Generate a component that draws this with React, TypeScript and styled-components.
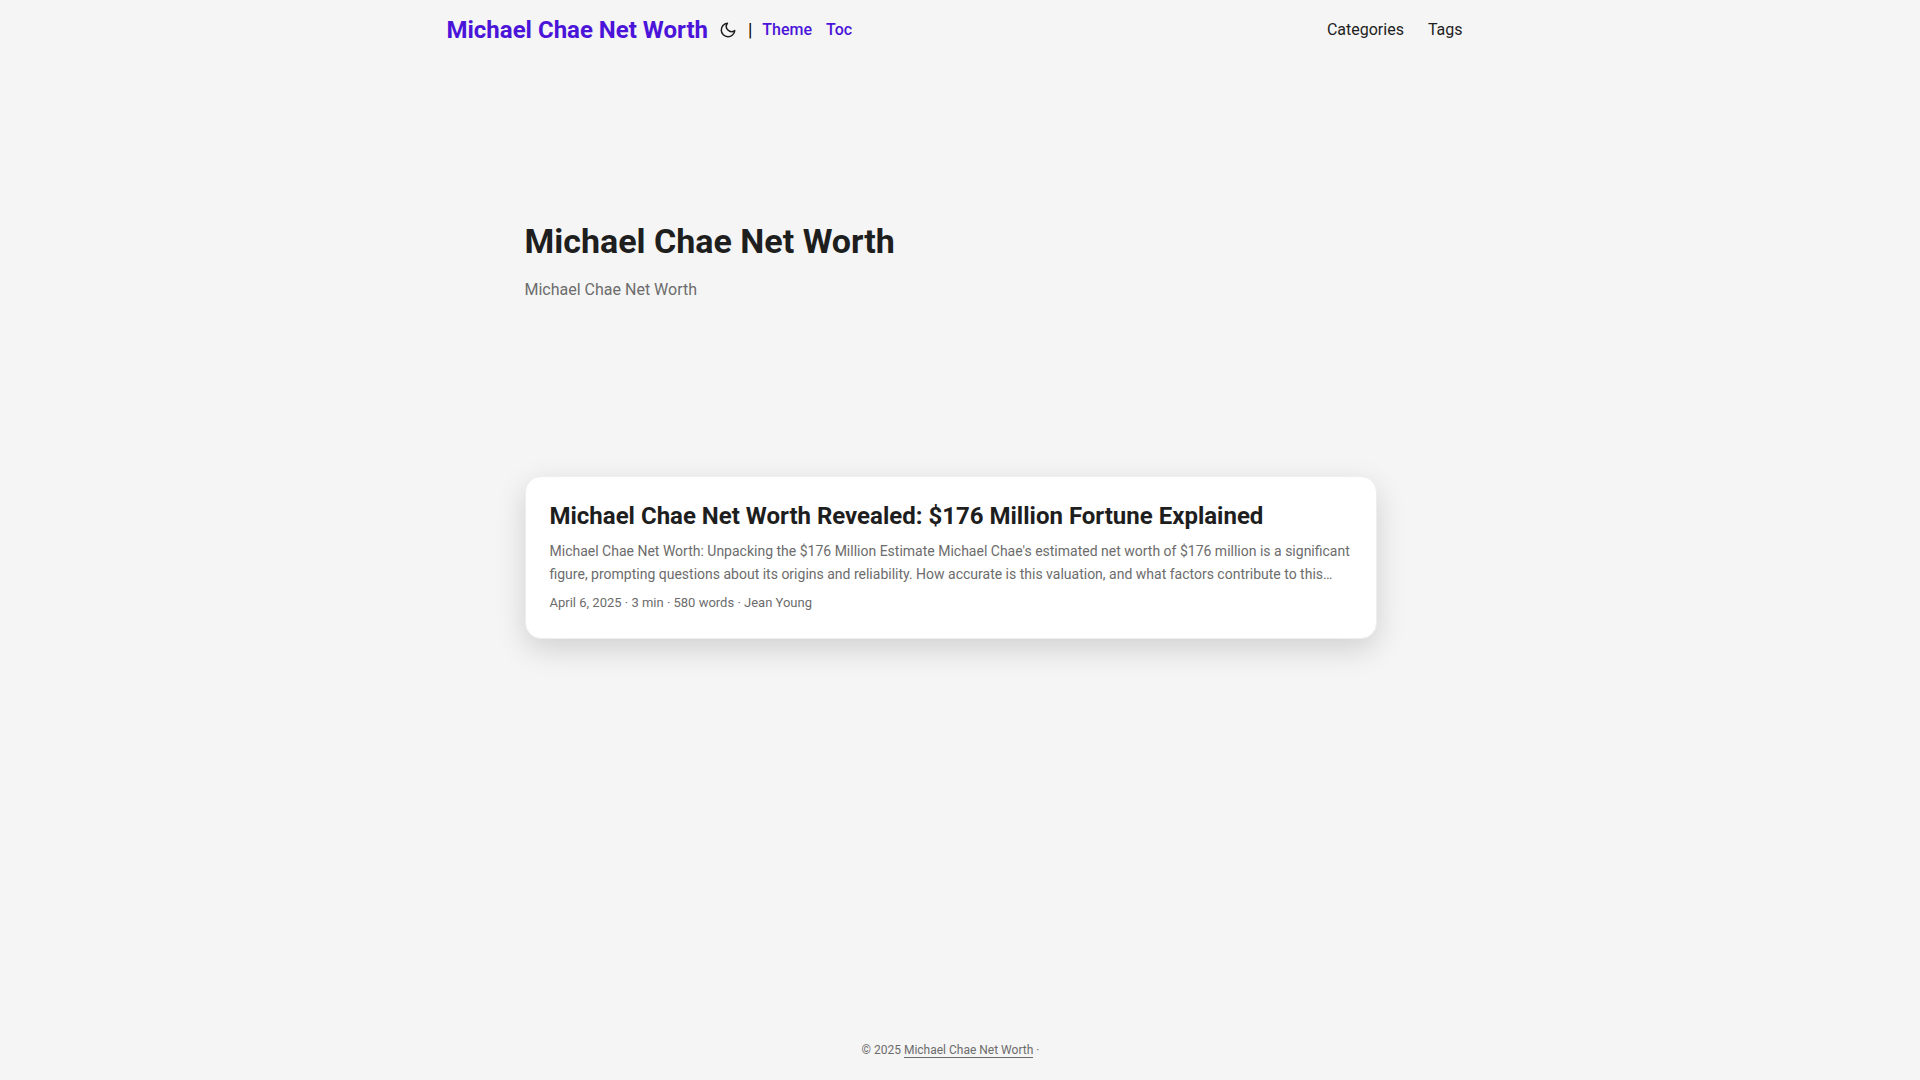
import React from "react";
import styled, { createGlobalStyle } from "styled-components";

const color = {
  page: "#f5f5f5",
  card: "#ffffff",
  border: "#eeeeee",
  primary: "#1e1e1e",
  secondary: "#6c6c6c",
  accent: "#4b14d9",
};

const GlobalStyle = createGlobalStyle`
  *, *::before, *::after { box-sizing: border-box; }
  body {
    margin: 0;
    background: ${color.page};
    color: ${color.primary};
    font-family: Roboto, "Liberation Sans", sans-serif;
    font-size: 16px;
    line-height: 1.6;
    text-rendering: optimizeLegibility;
  }
  h1, h2, p, ul { margin: 0; padding: 0; }
  a { color: inherit; text-decoration: none; }
`;

const Page = styled.div`
  display: flex;
  flex-direction: column;
  min-height: 100vh;
  padding-right: 19px;
`;

const Nav = styled.nav`
  display: flex;
  flex-wrap: wrap;
  justify-content: space-between;
  width: 100%;
  max-width: 1072px;
  margin: 0 auto;
  padding: 0 24px;
  line-height: 60px;
`;

const Brand = styled.div`
  display: flex;
  align-items: center;
  padding-left: 8px;
`;

const Logo = styled.a`
  color: ${color.accent};
  font-size: 24px;
  font-weight: 700;
`;

const ThemeToggle = styled.button`
  display: flex;
  margin: 0 11px;
  padding: 0;
  border: 0;
  background: none;
  color: inherit;
  cursor: pointer;
`;

const Divider = styled.span`
  color: #000000;
  font-size: 18px;
`;

const BrandLinks = styled.ul`
  display: flex;
  gap: 14px;
  margin-left: 10px;
  list-style: none;
  color: ${color.accent};
  font-weight: 500;
`;

const Menu = styled.ul`
  display: flex;
  gap: 24px;
  list-style: none;
`;

const Main = styled.main`
  flex: 1;
  width: 100%;
  max-width: 900px;
  margin: 0 auto;
  padding: 24px;
`;

const Intro = styled.header`
  display: flex;
  flex-direction: column;
  justify-content: center;
  min-height: 320px;
  margin: 17px 0 55px;
`;

const IntroTitle = styled.h1`
  font-size: 34px;
  line-height: 44px;
`;

const IntroText = styled.p`
  margin-top: 14px;
  color: ${color.secondary};
`;

const Card = styled.article`
  padding: 24px;
  border: 1px solid ${color.border};
  border-radius: 16px;
  background: ${color.card};
  box-shadow: 0 10px 30px rgba(0, 0, 0, 0.15);
`;

const CardTitle = styled.h2`
  font-size: 24px;
  line-height: 31px;
`;

const Summary = styled.p`
  margin: 8px 0;
  color: ${color.secondary};
  font-size: 14px;
  line-height: 23px;
`;

const Meta = styled.footer`
  padding-bottom: 2px;
  color: ${color.secondary};
  font-size: 13px;
  line-height: 18px;
`;

const PageFooter = styled.footer`
  color: ${color.secondary};
  font-size: 12px;
  line-height: 24px;
  padding: 18px 24px;
  text-align: center;
`;

const SiteLink = styled.a`
  border-bottom: 1px solid ${color.secondary};
`;

const MoonIcon = () => (
  <svg
    width="18"
    height="18"
    viewBox="0 0 24 24"
    fill="none"
    stroke="currentColor"
    strokeWidth="2"
    strokeLinecap="round"
    strokeLinejoin="round"
    aria-hidden="true"
  >
    <path d="M21 12.79A9 9 0 1 1 11.21 3 7 7 0 0 0 21 12.79z" />
  </svg>
);

const siteName = "Michael Chae Net Worth";

export default function App() {
  return (
    <>
      <GlobalStyle />
      <Page>
        <Nav>
          <Brand>
            <Logo href="#">{siteName}</Logo>
            <ThemeToggle type="button" aria-label="Toggle theme">
              <MoonIcon />
            </ThemeToggle>
            <Divider>|</Divider>
            <BrandLinks>
              <li><a href="#theme">Theme</a></li>
              <li><a href="#toc">Toc</a></li>
            </BrandLinks>
          </Brand>
          <Menu>
            <li><a href="#categories">Categories</a></li>
            <li><a href="#tags">Tags</a></li>
          </Menu>
        </Nav>
        <Main>
          <Intro>
            <IntroTitle>{siteName}</IntroTitle>
            <IntroText>{siteName}</IntroText>
          </Intro>
          <Card>
            <CardTitle>
              <a href="#post">Michael Chae Net Worth Revealed: $176 Million Fortune Explained</a>
            </CardTitle>
            <Summary>
              Michael Chae Net Worth: Unpacking the $176 Million Estimate Michael Chae's estimated net worth of
              $176 million is a significant figure, prompting questions about its origins and reliability. How
              accurate is this valuation, and what factors contribute to this…
            </Summary>
            <Meta>April 6, 2025 · 3 min · 580 words · Jean Young</Meta>
          </Card>
        </Main>
        <PageFooter>
          © 2025 <SiteLink href="#">{siteName}</SiteLink> ·
        </PageFooter>
      </Page>
    </>
  );
}
